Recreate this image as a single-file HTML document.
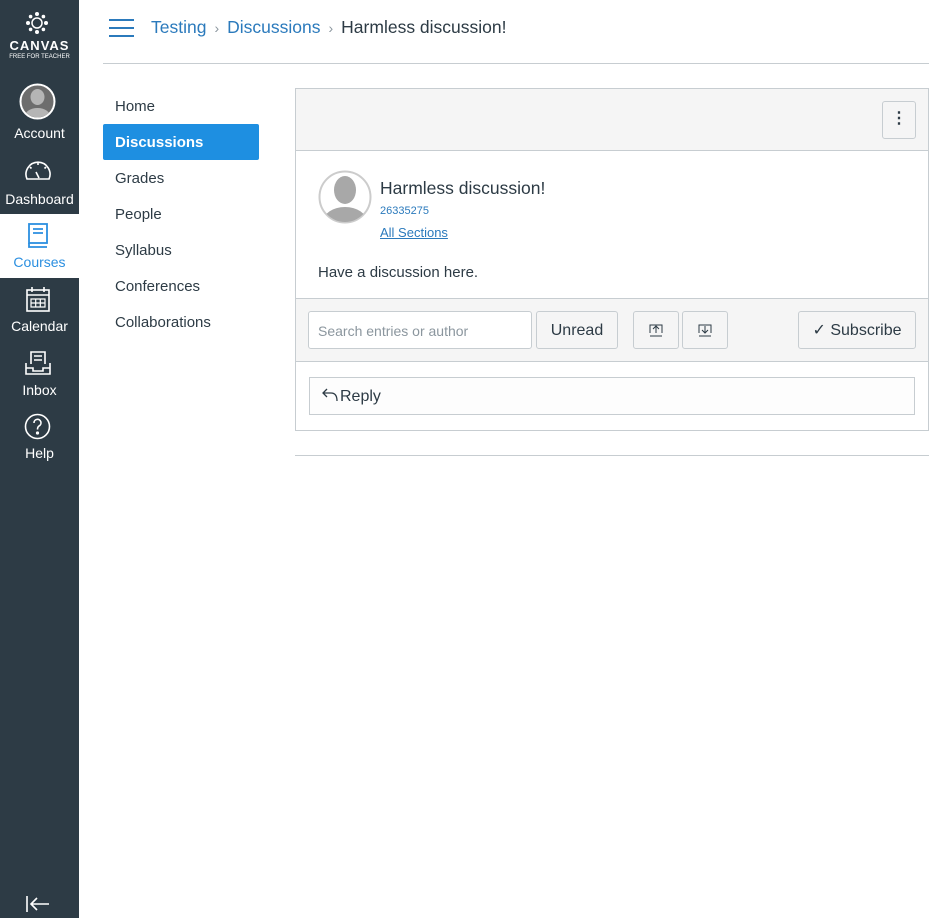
<!DOCTYPE html>
<html><head><meta charset="utf-8"><style>
*{box-sizing:border-box;margin:0;padding:0}
body{width:946px;height:918px;background:#fff;font-family:"Liberation Sans",sans-serif;color:#2d3b45;position:relative;overflow:hidden}
.side{position:absolute;left:0;top:0;width:79px;height:918px;background:#2d3b45;color:#fff}
.it{position:absolute;left:0;width:79px;text-align:center;font-size:14px}
.abs{position:absolute}
.nav a{position:absolute;left:103px;width:156px;height:36px;line-height:38px;padding-left:12px;font-size:15px;color:#2d3b45;text-decoration:none}
.btn{position:absolute;background:#f5f5f5;border:1px solid #c7cdd1;border-radius:3px;font-size:16px;color:#2d3b45;text-align:center}
</style></head><body>
<div class="side">
<svg class="abs" style="left:25px;top:11px" width="24" height="24" viewBox="0 0 24 24" fill="#fff"><circle cx="12" cy="3" r="2"/><circle cx="12" cy="21" r="2"/><circle cx="3" cy="12" r="2"/><circle cx="21" cy="12" r="2"/><circle cx="5.6" cy="5.6" r="1.8"/><circle cx="18.4" cy="5.6" r="1.8"/><circle cx="5.6" cy="18.4" r="1.8"/><circle cx="18.4" cy="18.4" r="1.8"/><circle cx="12" cy="12" r="5" fill="none" stroke="#fff" stroke-width="1.5"/></svg>
<div class="it" style="top:38px;font-size:13px;font-weight:bold;letter-spacing:1px">CANVAS</div>
<div class="it" style="top:54px;font-size:6px">FREE FOR TEACHER</div>
<svg class="abs" style="left:19px;top:83px" width="37" height="37" viewBox="0 0 37 37"><defs><clipPath id="a"><circle cx="18.5" cy="18.5" r="16"/></clipPath></defs><circle cx="18.5" cy="18.5" r="17" fill="#6d6d6d" stroke="#fff" stroke-width="2"/><g clip-path="url(#a)" fill="#b5b5b5"><ellipse cx="18.5" cy="14" rx="7" ry="8"/><ellipse cx="18.5" cy="34" rx="13" ry="9"/></g></svg>
<div class="it" style="top:125px">Account</div>
<svg class="abs" style="left:24px;top:158px" width="28" height="24" viewBox="0 0 28 24" fill="none" stroke="#fff" stroke-width="1.6"><path d="M3 21A12 12 0 1 1 25 21Z"/><path d="M14 5v2M6 9l1.5 1.5M22 9l-1.5 1.5"/><path d="M12 14l3 6"/></svg>
<div class="it" style="top:191px">Dashboard</div>
<div class="abs" style="left:0;top:214px;width:79px;height:64px;background:#fff"></div>
<svg class="abs" style="left:27px;top:223px" width="22" height="26" viewBox="0 0 22 26" fill="none" stroke="#2b8fe0" stroke-width="1.8"><rect x="2" y="1" width="18" height="19"/><path d="M2 20v4h18M6 6h10M6 10h10"/></svg>
<div class="it" style="top:254px;color:#2b8fe0">Courses</div>
<svg class="abs" style="left:26px;top:286px" width="24" height="26" viewBox="0 0 24 26" fill="none" stroke="#fff" stroke-width="1.6"><rect x="1" y="4" width="22" height="21"/><path d="M6 1v5M18 1v5M1 9h22"/><path d="M5 13h14v8H5zM9.7 13v8M14.3 13v8M5 17h14" stroke-width="1.2"/></svg>
<div class="it" style="top:318px">Calendar</div>
<svg class="abs" style="left:25px;top:350px" width="26" height="26" viewBox="0 0 26 26" fill="none" stroke="#fff" stroke-width="1.6"><path d="M6 14V2h14v12M9 6h8M9 10h8"/><path d="M1 13v11h24V13M1 18h7v3h10v-3h7"/></svg>
<div class="it" style="top:382px">Inbox</div>
<svg class="abs" style="left:24px;top:413px" width="27" height="27" viewBox="0 0 27 27" fill="none" stroke="#fff" stroke-width="1.6"><circle cx="13.5" cy="13.5" r="12"/><path d="M10 10a3.5 3.5 0 1 1 5 3c-1.5 1-1.5 2-1.5 3.5"/><circle cx="13.5" cy="20" r=".8" fill="#fff"/></svg>
<div class="it" style="top:445px">Help</div>
<svg class="abs" style="left:25px;top:895px" width="25" height="18" viewBox="0 0 25 18" fill="none" stroke="#fff" stroke-width="1.6"><path d="M2 1v16M24 9H6M12 3L6 9l6 6"/></svg>
</div>

<svg class="abs" style="left:109px;top:19px" width="25" height="18" viewBox="0 0 25 18" stroke="#2b7abc" stroke-width="2"><path d="M0 1h25M0 9h25M0 17h25"/></svg>
<div class="abs" style="left:151px;top:17px;font-size:17.5px;white-space:nowrap"><span style="color:#2b7abc">Testing</span><span style="color:#8b969e;font-size:14px;margin:0 8px">›</span><span style="color:#2b7abc">Discussions</span><span style="color:#8b969e;font-size:14px;margin:0 8px">›</span><span>Harmless discussion!</span></div>
<div class="abs" style="left:103px;top:63px;width:826px;height:1px;background:#c7cdd1"></div>

<div class="nav">
<a style="top:88px">Home</a>
<a style="top:124px;background:#1e8fe1;color:#fff;font-weight:bold;border-radius:2px">Discussions</a>
<a style="top:160px">Grades</a>
<a style="top:196px">People</a>
<a style="top:232px">Syllabus</a>
<a style="top:268px">Conferences</a>
<a style="top:304px">Collaborations</a>
</div>

<div class="abs" style="left:295px;top:88px;width:634px;height:343px;border:1px solid #c7cdd1"></div>
<div class="abs" style="left:296px;top:89px;width:632px;height:62px;background:#f5f5f5;border-bottom:1px solid #c7cdd1"></div>
<div class="btn" style="left:882px;top:101px;width:34px;height:38px;line-height:34px;font-weight:bold">⋮</div>
<svg class="abs" style="left:318px;top:170px" width="54" height="54" viewBox="0 0 54 54"><defs><clipPath id="c"><circle cx="27" cy="27" r="25"/></clipPath></defs><circle cx="27" cy="27" r="25.5" fill="#fff" stroke="#ccc" stroke-width="2"/><g clip-path="url(#c)" fill="#a8a8a8"><ellipse cx="27" cy="20" rx="11" ry="14"/><ellipse cx="27" cy="52" rx="22" ry="15"/></g></svg>
<div class="abs" style="left:380px;top:178px;font-size:17.5px">Harmless discussion!</div>
<div class="abs" style="left:380px;top:205px;font-size:11px;color:#2b7abc">26335275</div>
<div class="abs" style="left:380px;top:225px;font-size:13px;color:#2b7abc;text-decoration:underline">All Sections</div>
<div class="abs" style="left:318px;top:264px;font-size:15px">Have a discussion here.</div>

<div class="abs" style="left:296px;top:298px;width:632px;height:64px;background:#f5f5f5;border-top:1px solid #c7cdd1;border-bottom:1px solid #c7cdd1"></div>
<div class="abs" style="left:308px;top:311px;width:224px;height:38px;background:#fff;border:1px solid #c7cdd1;border-radius:3px;font-size:14px;color:#8b969e;line-height:38px;padding-left:9px">Search entries or author</div>
<div class="btn" style="left:536px;top:311px;width:82px;height:38px;line-height:38px">Unread</div>
<div class="btn" style="left:633px;top:311px;width:46px;height:38px"><svg style="margin-top:12px" width="14" height="13" viewBox="0 0 14 13" fill="none" stroke="#2d3b45"><path d="M1 12h12M7 9V2M4 5l3-3 3 3M1 9V1h12v8"/></svg></div>
<div class="btn" style="left:682px;top:311px;width:46px;height:38px"><svg style="margin-top:12px" width="14" height="13" viewBox="0 0 14 13" fill="none" stroke="#2d3b45"><path d="M1 12h12M7 2v7M4 6l3 3 3-3M1 9V1h12v8"/></svg></div>
<div class="btn" style="left:798px;top:311px;width:118px;height:38px;line-height:38px"><span style="font-size:16px">✓</span> Subscribe</div>

<div class="abs" style="left:309px;top:377px;width:606px;height:38px;border:1px solid #c7cdd1;background:#fdfdfd;font-size:16px;line-height:38px;padding-left:12px"><svg width="18" height="14" viewBox="0 0 18 14" fill="none" stroke="#2d3b45" stroke-width="1.3" style="vertical-align:-1px"><path d="M5 1L1 5l4 4M1 5h8c4 0 6 3 6 8"/></svg>Reply</div>

<div class="abs" style="left:295px;top:455px;width:634px;height:1px;background:#c7cdd1"></div>
</body></html>
